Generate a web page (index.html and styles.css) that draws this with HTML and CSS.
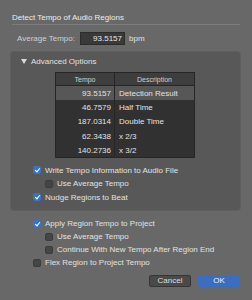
FILE: index.html
```html
<!DOCTYPE html>
<html lang="en">
<head>
    <meta charset="UTF-8">
    <meta name="viewport" content="width=device-width, initial-scale=1.0">
    <title>Detect Tempo of Audio Regions</title>
    <link rel="stylesheet" href="styles.css">
</head>
<body>
    <div class="dialog">
        <!-- Title -->
        <div class="dialog-title">Detect Tempo of Audio Regions</div>

        <!-- Average tempo -->
        <div class="tempo-row">
            <span class="tempo-label">Average Tempo:</span>
            <span class="tempo-input">93.5157</span>
            <span class="tempo-unit">bpm</span>
        </div>

        <!-- Advanced options -->
        <div class="panel">
            <div class="disclosure">
                <span class="triangle"></span>
                <span>Advanced Options</span>
            </div>
            <table class="tempo-table">
                <thead>
                    <tr><th class="col-tempo">Tempo</th><th>Description</th></tr>
                </thead>
                <tbody>
                    <tr class="selected"><td class="num">93.5157</td><td>Detection Result</td></tr>
                    <tr><td class="num">46.7579</td><td>Half Time</td></tr>
                    <tr><td class="num">187.0314</td><td>Double Time</td></tr>
                    <tr><td class="num">62.3438</td><td>x 2/3</td></tr>
                    <tr><td class="num">140.2736</td><td>x 3/2</td></tr>
                </tbody>
            </table>
            <div class="checks">
                <div class="check"><span class="box on"></span>Write Tempo Information to Audio File</div>
                <div class="check sub"><span class="box"></span>Use Average Tempo</div>
                <div class="check"><span class="box on"></span>Nudge Regions to Beat</div>
            </div>
        </div>

        <div class="checks outer">
            <div class="check"><span class="box on"></span>Apply Region Tempo to Project</div>
            <div class="check sub"><span class="box"></span>Use Average Tempo</div>
            <div class="check sub"><span class="box"></span>Continue With New Tempo After Region End</div>
            <div class="check"><span class="box"></span>Flex Region to Project Tempo</div>
        </div>

        <!-- Buttons -->
        <div class="buttons">
            <button class="btn">Cancel</button>
            <button class="btn btn-primary">OK</button>
        </div>
    </div>
</body>
</html>
```
FILE: styles.css
```css
body {
    margin: 0;
    background-color: #686868;
    font-family: "Liberation Sans", Arial, sans-serif;
    font-size: 8px;
    color: #e2e2e2;
}
.dialog {
    padding: 12px 12px 0 11px;
}
.dialog-title {
    margin-left: 1px;
    line-height: 11px;
    color: #ececec;
    padding-bottom: 1px;
    border-bottom: 1px solid #7c7c7c;
}
.tempo-row {
    display: flex;
    align-items: center;
    margin-top: 7px;
    height: 13px;
}
.tempo-label {
    margin-left: 6px;
    width: 63px;
    color: #cfcfcf;
}
.tempo-input {
    box-sizing: border-box;
    width: 45px;
    height: 13px;
    line-height: 12px;
    padding-right: 2px;
    text-align: right;
    background-color: #393939;
    border: 1px solid #2c2c2c;
    color: #e8e8e8;
}
.tempo-unit {
    margin-left: 4px;
}
.panel {
    margin-top: 7px;
    height: 158px;
    background-color: #585858;
    border-radius: 3px;
    box-shadow: 0 0 0 1px #5f5f5f;
    padding-top: 4px;
    box-sizing: border-box;
}
.disclosure {
    display: flex;
    align-items: center;
    height: 10px;
    padding-left: 10px;
}
.triangle {
    width: 0;
    height: 0;
    border-left: 3px solid transparent;
    border-right: 3px solid transparent;
    border-top: 5px solid #d8d8d8;
    margin-right: 4px;
}
.tempo-table {
    margin: 6px 0 0 44px;
    width: 140px;
    border-collapse: collapse;
    background-color: #313131;
    border: 1px solid #262626;
}
.tempo-table th {
    height: 12px;
    padding: 0;
    font-weight: normal;
    font-size: 7px;
    color: #d0d0d0;
    background-color: #3e3e3e;
    border: 1px solid #262626;
}
.tempo-table .col-tempo {
    width: 58px;
}
.tempo-table td {
    height: 14.3px;
    padding: 0 0 0 4px;
    border-left: 1px solid #262626;
}
.tempo-table td.num {
    text-align: right;
    padding: 0 3px 0 0;
}
.tempo-table tr.selected td {
    background-color: #575757;
}
.checks {
    margin-top: 5px;
}
.checks.outer {
    margin-top: 7px;
}
.check {
    display: flex;
    align-items: center;
    height: 13.5px;
    padding-left: 22px;
}
.outer .check {
    height: 13px;
}
.check.sub {
    padding-left: 34px;
}
.box {
    box-sizing: border-box;
    width: 8px;
    height: 8px;
    margin-right: 4px;
    border-radius: 2px;
    background-color: #454545;
    border: 1px solid #3c3c3c;
    position: relative;
}
.box.on {
    background-color: #3c72c6;
    border-color: #3c72c6;
}
.box.on::after {
    content: "";
    position: absolute;
    left: 2px;
    top: 0;
    width: 2px;
    height: 4px;
    border-right: 1px solid #fff;
    border-bottom: 1px solid #fff;
    transform: rotate(40deg);
}
.buttons {
    display: flex;
    justify-content: flex-end;
    gap: 7px;
    margin-top: 6px;
}
.btn {
    width: 42px;
    height: 12px;
    padding: 0;
    font-family: inherit;
    font-size: 8px;
    line-height: 10px;
    color: #dedede;
    background-color: #4a4a4a;
    border: 1px solid #363636;
    border-radius: 2px;
}
.btn-primary {
    background-color: #3b6ebe;
    border-color: #3b6ebe;
    color: #f2f2f2;
}
```
